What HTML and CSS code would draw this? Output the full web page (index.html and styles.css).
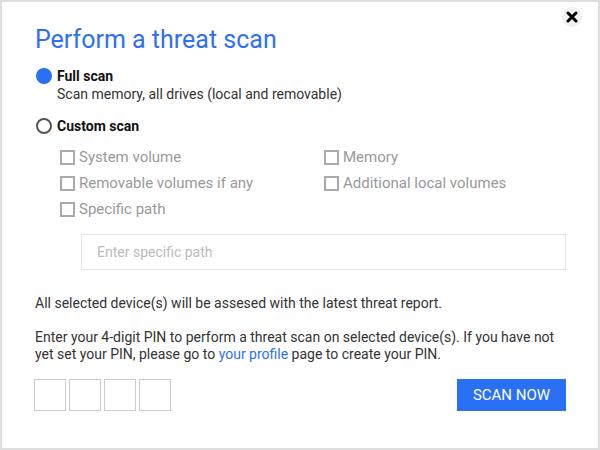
FILE: index.html
```html
<!DOCTYPE html>
<html lang="en">
<head>
<meta charset="utf-8">
<title>Perform a threat scan</title>
<link rel="stylesheet" href="styles.css">
</head>
<body>
<div class="dialog">
  <button class="close" aria-label="Close">
    <svg width="12" height="12" viewBox="0 0 12 12"><path d="M2 2 L10 10 M10 2 L2 10" stroke="#000" stroke-width="3" stroke-linecap="round"/></svg>
  </button>
  <h1 class="title">Perform a threat scan</h1>

  <div class="option">
    <span class="radio radio-on"></span>
    <div class="option-body">
      <div class="option-label">Full scan</div>
      <div class="option-desc">Scan memory, all drives (local and removable)</div>
    </div>
  </div>

  <div class="option option-custom">
    <span class="radio radio-off"></span>
    <div class="option-body">
      <div class="option-label">Custom scan</div>
    </div>
  </div>

  <div class="checks">
    <label class="check"><span class="box"></span>System volume</label>
    <label class="check"><span class="box"></span>Memory</label>
    <label class="check"><span class="box"></span>Removable volumes if any</label>
    <label class="check"><span class="box"></span>Additional local volumes</label>
    <label class="check"><span class="box"></span>Specific path</label>
  </div>

  <div class="path">Enter specific path</div>

  <p class="note">All selected device(s) will be assesed with the latest threat report.</p>
  <p class="pin-text">Enter your 4-digit PIN to perform a threat scan on selected device(s). If you have not yet set your PIN, please go to <a href="#">your profile</a> page to create your PIN.</p>

  <div class="footer">
    <div class="pins">
      <span class="pin"></span><span class="pin"></span><span class="pin"></span><span class="pin"></span>
    </div>
    <button class="scan">SCAN NOW</button>
  </div>
</div>
</body>
</html>
```

FILE: styles.css
```css
* { box-sizing: border-box; }
html, body { margin: 0; padding: 0; background: #fff; }
body { font-family: Roboto, "Liberation Sans", Arial, sans-serif; color: #333; font-size: 14px; }

.dialog {
  position: relative;
  width: 600px;
  height: 450px;
  border: 2px solid #dedede;
  padding: 24px 32px 0 33px;
}

.close {
  position: absolute;
  top: 5px;
  right: 16px;
  width: 20px;
  height: 20px;
  border-radius: 50%;
  border: none;
  background: #f0f0f0;
  padding: 0;
  display: flex;
  align-items: center;
  justify-content: center;
}

.title {
  margin: 0;
  font-size: 25px;
  line-height: 28px;
  font-weight: 400;
  color: #2f6ff4;
}

.option {
  display: flex;
  align-items: flex-start;
  margin-top: 13px;
  line-height: 18px;
}
.option-custom { margin-top: 14px; }

.radio {
  width: 16px;
  height: 16px;
  border-radius: 50%;
  margin: 1px 5px 0 1px;
  flex: none;
}
.radio-on { background: #2b6ff5; }
.radio-off { border: 2px solid #555; }

.option-label { font-weight: 700; color: #111; }
.option-desc { color: #333; }

.checks {
  display: grid;
  grid-template-columns: 264px 1fr;
  margin: 9px 0 0 25px;
}
.check {
  display: flex;
  align-items: center;
  height: 26px;
  font-size: 15px;
  color: #999;
}
.box {
  width: 15px;
  height: 15px;
  border: 2px solid #aaa;
  margin-right: 4px;
  flex: none;
}

.path {
  margin: 12px 0 0 46px;
  height: 36px;
  border: 1px solid #e6e6e6;
  padding: 0 15px;
  display: flex;
  align-items: center;
  color: #bbb;
}

.note {
  margin: 24px 0 0;
  line-height: 18px;
}

.pin-text {
  margin: 17px 0 0;
  line-height: 17px;
}
.pin-text a { color: #2f6ff4; text-decoration: none; }

.footer {
  display: flex;
  justify-content: space-between;
  align-items: flex-start;
  margin-top: 16px;
}
.pins { display: flex; gap: 3px; margin-left: -1px; }
.pin {
  width: 32px;
  height: 32px;
  border: 1px solid #ccc;
}

.scan {
  width: 109px;
  height: 32px;
  border: none;
  background: #2a70f5;
  color: #fff;
  font-family: Roboto, "Liberation Sans", Arial, sans-serif;
  font-size: 15px;
  font-weight: 400;
  padding: 0;
}
```
